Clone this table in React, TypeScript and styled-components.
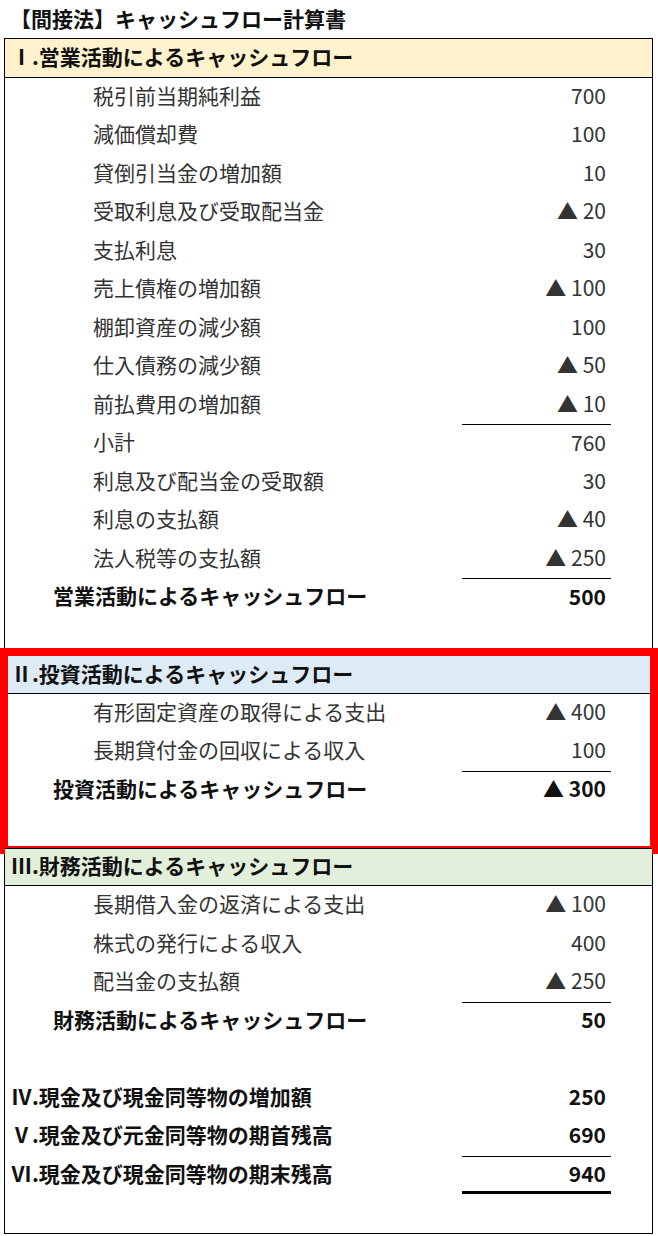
import styled, { createGlobalStyle } from "styled-components";

const GlobalStyle = createGlobalStyle`
  html, body {
    margin: 0;
    padding: 0;
    background: #ffffff;
  }
  body {
    font-family: "Noto Sans CJK JP", "Noto Sans", sans-serif;
    color: #262626;
    overflow: hidden;
  }
`;

type Tone = "yellow" | "blue" | "green";

const toneColors: Record<Tone, string> = {
  yellow: "#fff2cc",
  blue: "#ddebf7",
  green: "#e2efda",
};

type Kind = "item" | "total" | "grand" | "blank";

interface ILine {
  label?: string;
  amount?: string;
  kind: Kind;
  ruled?: boolean;
  closing?: boolean;
}

interface ISection {
  title: string;
  tone: Tone;
  first?: boolean;
  highlight?: boolean;
  lines: ILine[];
}

const SECTIONS: ISection[] = [
  {
    title: "Ⅰ.営業活動によるキャッシュフロー",
    tone: "yellow",
    first: true,
    lines: [
      { label: "税引前当期純利益", amount: "700", kind: "item" },
      { label: "減価償却費", amount: "100", kind: "item" },
      { label: "貸倒引当金の増加額", amount: "10", kind: "item" },
      { label: "受取利息及び受取配当金", amount: "▲ 20", kind: "item" },
      { label: "支払利息", amount: "30", kind: "item" },
      { label: "売上債権の増加額", amount: "▲ 100", kind: "item" },
      { label: "棚卸資産の減少額", amount: "100", kind: "item" },
      { label: "仕入債務の減少額", amount: "▲ 50", kind: "item" },
      { label: "前払費用の増加額", amount: "▲ 10", kind: "item" },
      { label: "小計", amount: "760", kind: "item", ruled: true },
      { label: "利息及び配当金の受取額", amount: "30", kind: "item" },
      { label: "利息の支払額", amount: "▲ 40", kind: "item" },
      { label: "法人税等の支払額", amount: "▲ 250", kind: "item" },
      {
        label: "営業活動によるキャッシュフロー",
        amount: "500",
        kind: "total",
        ruled: true,
      },
      { kind: "blank" },
    ],
  },
  {
    title: "Ⅱ.投資活動によるキャッシュフロー",
    tone: "blue",
    highlight: true,
    lines: [
      { label: "有形固定資産の取得による支出", amount: "▲ 400", kind: "item" },
      { label: "長期貸付金の回収による収入", amount: "100", kind: "item" },
      {
        label: "投資活動によるキャッシュフロー",
        amount: "▲ 300",
        kind: "total",
        ruled: true,
      },
      { kind: "blank" },
    ],
  },
  {
    title: "Ⅲ.財務活動によるキャッシュフロー",
    tone: "green",
    lines: [
      { label: "長期借入金の返済による支出", amount: "▲ 100", kind: "item" },
      { label: "株式の発行による収入", amount: "400", kind: "item" },
      { label: "配当金の支払額", amount: "▲ 250", kind: "item" },
      {
        label: "財務活動によるキャッシュフロー",
        amount: "50",
        kind: "total",
        ruled: true,
      },
      { kind: "blank" },
      { label: "Ⅳ.現金及び現金同等物の増加額", amount: "250", kind: "grand" },
      { label: "Ⅴ.現金及び元金同等物の期首残高", amount: "690", kind: "grand" },
      {
        label: "Ⅵ.現金及び現金同等物の期末残高",
        amount: "940",
        kind: "grand",
        ruled: true,
        closing: true,
      },
      { kind: "blank" },
    ],
  },
];

const ROW = "38.5px";

const Page = styled.div`
  width: 658px;
`;

const Title = styled.div`
  height: 38px;
  box-sizing: border-box;
  padding: 0 0 3px 10px;
  display: flex;
  align-items: center;
  font-size: 21px;
  font-weight: 700;
  color: #111;
  white-space: nowrap;
`;

const Sheet = styled.div`
  margin-left: 4px;
  width: 649px;
  box-sizing: border-box;
  border: 1px solid #000;
`;

const Block = styled.div`
  position: relative;
`;

const RedFrame = styled.div`
  position: absolute;
  top: -7px;
  left: -5px;
  right: -6px;
  bottom: -6px;
  border: 8px solid #ff0000;
  pointer-events: none;
`;

const SectionHeader = styled.div<{ $tone: Tone; $first?: boolean }>`
  height: ${ROW};
  box-sizing: border-box;
  background: ${(p) => toneColors[p.$tone]};
  border-top: ${(p) => (p.$first ? "none" : "1px solid #000")};
  border-bottom: 1px solid #000;
  padding: 0 0 3px 6px;
  display: flex;
  align-items: center;
  font-size: 21px;
  font-weight: 700;
  color: #111;
  white-space: nowrap;
`;

const Row = styled.div`
  height: ${ROW};
  display: grid;
  grid-template-columns: 1fr 149px 41px;
`;

const labelIndent: Record<Kind, number> = {
  item: 88,
  total: 48,
  grand: 6,
  blank: 0,
};

const Label = styled.div<{ $kind: Kind }>`
  padding: 0 0 4px ${(p) => labelIndent[p.$kind]}px;
  display: flex;
  align-items: center;
  font-size: 21px;
  font-weight: ${(p) => (p.$kind === "item" ? 400 : 700)};
  color: ${(p) => (p.$kind === "item" ? "#333" : "#111")};
  white-space: nowrap;
`;

const Amount = styled.div<{ $bold?: boolean; $ruled?: boolean; $closing?: boolean }>`
  box-sizing: border-box;
  border-top: ${(p) => (p.$ruled ? "1px solid #000" : "none")};
  border-bottom: ${(p) => (p.$closing ? "3px solid #000" : "none")};
  padding: 0 5px ${(p) => (p.$closing ? "1px" : "4px")} 0;
  display: flex;
  align-items: center;
  justify-content: flex-end;
  font-size: 21px;
  font-weight: ${(p) => (p.$bold ? 700 : 400)};
  color: ${(p) => (p.$bold ? "#111" : "#333")};
  white-space: nowrap;
`;

const Filler = styled.div``;

const SectionView = ({ section }: { section: ISection }) => (
  <Block>
    <SectionHeader $tone={section.tone} $first={section.first}>
      {section.title}
    </SectionHeader>
    {section.lines.map((line, i) => (
      <Row key={i}>
        <Label $kind={line.kind}>{line.label}</Label>
        <Amount
          $bold={line.kind === "total" || line.kind === "grand"}
          $ruled={line.ruled}
          $closing={line.closing}
        >
          {line.amount}
        </Amount>
        <Filler />
      </Row>
    ))}
    {section.highlight ? <RedFrame /> : null}
  </Block>
);

const App = () => {
  return (
    <Page>
      <GlobalStyle />
      <Title>【間接法】キャッシュフロー計算書</Title>
      <Sheet>
        {SECTIONS.map((section) => (
          <SectionView key={section.title} section={section} />
        ))}
      </Sheet>
    </Page>
  );
};

export default App;
